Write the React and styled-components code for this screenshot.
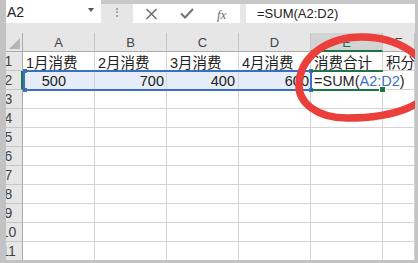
import React from "react";
import styled, { createGlobalStyle } from "styled-components";

const GlobalStyle = createGlobalStyle`
  html, body {
    margin: 0;
    padding: 0;
    background: #ffffff;
  }
  body {
    font-family: "Liberation Sans", "Noto Sans CJK SC", sans-serif;
  }
`;

const BLUE = "#3b6fc6";
const GREEN = "#217346";

const Frame = styled.div`
  position: relative;
  width: 418px;
  height: 263px;
  box-sizing: border-box;
  border-left: 6px solid #c3c3c3;
  border-right: 3px solid #c3c3c3;
  border-bottom: 3px solid #c3c3c3;
  overflow: hidden;
  background: #e6e6e6;
`;

const Toolbar = styled.div`
  display: flex;
  height: 23px;
  background: linear-gradient(#c8c8c8 0 4px, #e6e6e6 4px);
`;

const NameBox = styled.div`
  width: 95px;
  height: 23px;
  box-sizing: border-box;
  background: #fff;
  display: flex;
  align-items: center;
  justify-content: space-between;
  padding: 0 7px 0 1px;
  font-size: 14px;
  color: #222;
`;

const Arrow = styled.span`
  width: 0;
  height: 0;
  border-left: 3.5px solid transparent;
  border-right: 3.5px solid transparent;
  border-top: 4px solid #555;
  margin-bottom: 4px;
`;

const Grip = styled.div`
  width: 32px;
  display: flex;
  justify-content: center;
  align-items: center;
  padding-top: 2px;
  span {
    display: block;
    height: 9px;
    border-left: 2px dotted #a6a6a6;
  }
`;

const Buttons = styled.div`
  margin-top: 4px;
  width: 107px;
  height: 19px;
  background: #fff;
  display: flex;
  align-items: center;
  padding-left: 12px;
  box-sizing: border-box;
  color: #727272;
`;

const ToolIcon = styled.svg`
  display: block;
  margin-left: ${(p) => p.$gap || 0}px;
`;

const Fx = styled.span`
  margin-left: 23px;
  font-family: "Liberation Serif", serif;
  font-style: italic;
  font-size: 13px;
  color: #6a6a6a;
  padding-top: 2px;
`;

const FormulaInput = styled.div`
  flex: 1;
  margin: 4px 0 0 6px;
  height: 19px;
  background: #fff;
  display: flex;
  align-items: center;
  padding-left: 11px;
  font-size: 13px;
  color: #222;
`;

const Spacer = styled.div`
  height: 10px;
`;

const Sheet = styled.div`
  display: grid;
  grid-template-columns: 17px repeat(5, 72px) 1fr;
  grid-auto-rows: 19px;
  background: #fff;
`;

const Corner = styled.div`
  grid-row: 1;
  grid-column: 1;
  box-sizing: border-box;
  background: #e6e6e6;
  border-right: 1px solid #ababab;
  border-bottom: 1px solid #ababab;
  display: flex;
  align-items: flex-end;
  justify-content: flex-end;
  padding: 0 2px 2px 0;
`;

const ColHead = styled.div`
  grid-row: 1;
  grid-column: ${(p) => p.$c};
  box-sizing: border-box;
  background: ${(p) => (p.$active ? "#d3d3d3" : "#e6e6e6")};
  border-right: 1px solid #c6c6c6;
  border-bottom: ${(p) => (p.$active ? `2px solid ${GREEN}` : "1px solid #ababab")};
  display: flex;
  align-items: center;
  justify-content: center;
  font-size: 13px;
  color: ${(p) => (p.$active ? GREEN : "#444")};
  padding-top: 1px;
`;

const RowHead = styled.div`
  grid-row: ${(p) => p.$r};
  grid-column: 1;
  box-sizing: border-box;
  background: #e6e6e6;
  border-right: ${(p) => (p.$active ? `2px solid ${GREEN}` : "1px solid #ababab")};
  border-bottom: 1px solid #c6c6c6;
  display: flex;
  align-items: center;
  justify-content: center;
  padding-right: ${(p) => (p.$active ? 10 : 11)}px;
  font-size: 14px;
  color: #444;
`;

const Cell = styled.div`
  grid-row: ${(p) => p.$r};
  grid-column: ${(p) => p.$c};
  box-sizing: border-box;
  background: ${(p) => (p.$range ? "#e6edf8" : "transparent")};
  border-right: 1px solid ${(p) => (p.$open ? "transparent" : "#d4d4d4")};
  border-bottom: 1px solid #d4d4d4;
  display: flex;
  align-items: center;
  justify-content: ${(p) => (p.$right ? "flex-end" : "flex-start")};
  padding: 1px ${(p) => p.$padR ?? 3}px 0 3px;
  font-size: 14.5px;
  color: #222;
  white-space: nowrap;
  min-width: 0;
  position: relative;
  z-index: ${(p) => (p.$open ? 1 : 0)};
`;

const Ref = styled.span`
  color: ${BLUE};
`;

const RangeBox = styled.div`
  grid-column: 2 / 6;
  grid-row: 3;
  margin: -1px -1px -1px 0;
  border: 2px solid ${BLUE};
  position: relative;
  z-index: 2;
  pointer-events: none;
`;

const Handle = styled.span`
  position: absolute;
  width: 4px;
  height: 4px;
  background: ${BLUE};
  ${(p) => (p.$top ? "top: -3px;" : "bottom: -3px;")}
  ${(p) => (p.$left ? "left: -2px;" : "right: -3px;")}
`;

const ActiveBox = styled.div`
  grid-column: 6 / 7;
  grid-row: 3;
  margin: -1px 0;
  border-top: 2px solid ${GREEN};
  border-bottom: 2px solid ${GREEN};
  position: relative;
  z-index: 2;
  pointer-events: none;
`;

const FillHandle = styled.span`
  position: absolute;
  right: -3px;
  bottom: -4px;
  width: 5px;
  height: 5px;
  background: ${GREEN};
  border: 1px solid #fff;
`;

const Mark = styled.svg`
  position: absolute;
  left: -6px;
  top: 0;
  z-index: 5;
  pointer-events: none;
`;

const cols = ["A", "B", "C", "D", "E", "F"];

const rows = [
  [
    { t: "1月消费" },
    { t: "2月消费" },
    { t: "3月消费" },
    { t: "4月消费" },
    { t: "消费合计" },
    { t: "积分" },
  ],
  [
    { t: "500", right: true, padR: 28, range: true },
    { t: "700", right: true, padR: 2, range: true },
    { t: "400", right: true, padR: 3, range: true },
    { t: "600", right: true, padR: 1, range: true },
    { formula: true, open: true },
    {},
  ],
];

// hand-drawn red loop round the total cell
const loop =
  "M299 86 C299 56 328 37 362 37 C398 37 430 57 430 84 " +
  "C430 104 396 118 347 118 C316 118 299 102 299 86 Z";

function SumFormula() {
  return (
    <>
      =SUM(<Ref>A2:D2</Ref>)
    </>
  );
}

export default function App() {
  const bodyRows = [];
  for (let r = 1; r <= 11; r++) {
    const data = rows[r - 1] || [{}, {}, {}, {}, {}, {}];
    bodyRows.push(
      <React.Fragment key={r}>
        <RowHead $r={r + 1} $active={r === 2}>
          {r}
        </RowHead>
        {data.map((c, i) => (
          <Cell
            key={i}
            $r={r + 1}
            $c={i + 2}
            $right={c.right}
            $padR={c.padR}
            $range={c.range}
            $open={c.open}
          >
            {c.formula ? <SumFormula /> : c.t}
          </Cell>
        ))}
      </React.Fragment>
    );
  }

  return (
    <>
      <GlobalStyle />
      <Frame>
        <Toolbar>
          <NameBox>
            A2
            <Arrow />
          </NameBox>
          <Grip>
            <span />
          </Grip>
          <Buttons>
            <ToolIcon width="13" height="12" viewBox="0 0 13 12">
              <path
                d="M1.5 1 L11.5 11 M11.5 1 L1.5 11"
                stroke="currentColor"
                strokeWidth="1.6"
                fill="none"
              />
            </ToolIcon>
            <ToolIcon $gap={22} width="14" height="11" viewBox="0 0 14 11">
              <path
                d="M1 5.5 L5 9.5 L13 1"
                stroke="currentColor"
                strokeWidth="2"
                fill="none"
              />
            </ToolIcon>
            <Fx>fx</Fx>
          </Buttons>
          <FormulaInput>=SUM(A2:D2)</FormulaInput>
        </Toolbar>
        <Spacer />
        <Sheet>
          <Corner>
            <svg width="11" height="11" viewBox="0 0 11 11">
              <path d="M11 0 L11 11 L0 11 Z" fill="#b5b5b5" />
            </svg>
          </Corner>
          {cols.map((c, i) => (
            <ColHead key={c} $c={i + 2} $active={c === "E"}>
              {c}
            </ColHead>
          ))}
          {bodyRows}
          <RangeBox>
            <Handle $top $left />
            <Handle $left />
            <Handle $top />
            <Handle />
          </RangeBox>
          <ActiveBox>
            <FillHandle />
          </ActiveBox>
        </Sheet>
        <Mark width="418" height="263" viewBox="0 0 418 263">
          <path d={loop} fill="none" stroke="#ea3f3a" strokeWidth="7.5" />
        </Mark>
      </Frame>
    </>
  );
}
